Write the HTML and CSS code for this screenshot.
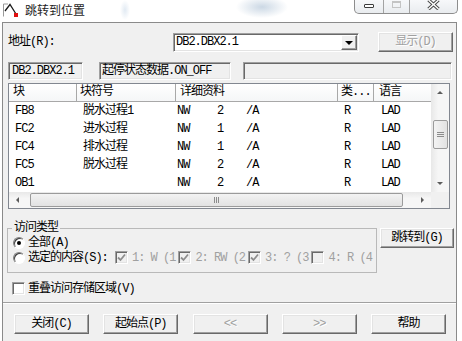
FILE: index.html
```html
<!DOCTYPE html>
<html lang="zh-CN">
<head>
    <meta charset="UTF-8">
    <title>跳转到位置</title>
    <link rel="stylesheet" href="styles.css">
</head>
<body>
    <div class="titlebar">
        <svg class="app-icon" viewBox="0 0 16 16" width="16" height="16">
            <path d="M1.5 2 V14.5 M1.5 2 H6" stroke="#9a9a9a" stroke-width="1" fill="none"/>
            <path d="M3 9 L8 2.5 L14 12" stroke="#1a1a1a" stroke-width="1.3" fill="none"/>
            <rect x="12" y="11" width="4" height="4" fill="#e01010"/>
        </svg>
        <span class="title">跳转到位置</span>
        <div class="caption">
            <span class="cap-btn cap-min"><i></i></span>
            <span class="cap-btn cap-max"><i></i></span>
            <span class="cap-btn cap-close">
                <svg viewBox="0 0 13 10" width="13" height="10">
                    <path d="M1.5 0 L11.5 9 M11.5 0 L1.5 9" stroke="#4a4a4a" stroke-width="3.4"/>
                    <path d="M1.5 0 L11.5 9 M11.5 0 L1.5 9" stroke="#fff" stroke-width="1.4"/>
                </svg>
            </span>
        </div>
    </div>

    <div class="client">
        <div class="row-addr">
            <label class="lbl-addr">地址(R):</label>
            <div class="combo">
                <span class="combo-text">DB2.DBX2.1</span>
                <span class="combo-btn"><i></i></span>
            </div>
            <button class="btn btn-show" disabled>显示(D)</button>
        </div>

        <div class="row-info">
            <div class="field f1">DB2.DBX2.1</div>
            <div class="field f2">起停状态数据.ON_OFF</div>
            <div class="field f3"></div>
        </div>

        <div class="list">
            <div class="lv-main">
                <div class="lv-row lv-head">
                    <span>块</span><span>块符号</span><span>详细资料</span><span>类...</span><span>语言</span>
                </div>
                <div class="lv-row"><span>FB8</span><span>脱水过程1</span><span class="det"><b>NW</b><b>2</b>/A</span><span>R</span><span>LAD</span></div>
                <div class="lv-row"><span>FC2</span><span>进水过程</span><span class="det"><b>NW</b><b>1</b>/A</span><span>R</span><span>LAD</span></div>
                <div class="lv-row"><span>FC4</span><span>排水过程</span><span class="det"><b>NW</b><b>1</b>/A</span><span>R</span><span>LAD</span></div>
                <div class="lv-row"><span>FC5</span><span>脱水过程</span><span class="det"><b>NW</b><b>2</b>/A</span><span>R</span><span>LAD</span></div>
                <div class="lv-row"><span>OB1</span><span></span><span class="det"><b>NW</b><b>2</b>/A</span><span>R</span><span>LAD</span></div>
            </div>
            <div class="vscroll">
                <span class="sb-arrow"><i class="tri-up"></i></span>
                <div class="sb-track"><div class="thumb thumb-v"><i></i><i></i><i></i></div></div>
                <span class="sb-arrow"><i class="tri-down"></i></span>
            </div>
            <div class="hscroll">
                <span class="sb-arrow"><i class="tri-left"></i></span>
                <div class="sb-track"><div class="thumb thumb-h"><i></i><i></i><i></i></div></div>
                <span class="sb-arrow"><i class="tri-right"></i></span>
            </div>
            <div class="corner"></div>
        </div>

        <div class="row-group">
            <fieldset class="access">
                <legend>访问类型</legend>
                <div class="opt">
                    <span class="radio checked"></span>全部(A)
                </div>
                <div class="opt">
                    <span class="radio"></span><span class="opt-sel">选定的内容(S):</span>
                    <span class="ci"><span class="cb"><svg viewBox="0 0 9 9"><path d="M1 4.5 L3.5 7 L8 1.5"/></svg></span>1: W (1</span>
                    <span class="ci"><span class="cb"><svg viewBox="0 0 9 9"><path d="M1 4.5 L3.5 7 L8 1.5"/></svg></span>2: RW (2</span>
                    <span class="ci"><span class="cb"><svg viewBox="0 0 9 9"><path d="M1 4.5 L3.5 7 L8 1.5"/></svg></span>3: ? (3</span>
                    <span class="ci"><span class="cb"></span>4: R (4</span>
                </div>
            </fieldset>
            <button class="btn btn-goto">跳转到(G)</button>
        </div>

        <div class="row-overlap">
            <span class="cb enabled"></span>重叠访问存储区域(V)
        </div>

        <div class="sep"></div>

        <div class="row-buttons">
            <button class="btn">关闭(C)</button>
            <button class="btn">起始点(P)</button>
            <button class="btn" disabled>&lt;&lt;</button>
            <button class="btn" disabled>&gt;&gt;</button>
            <button class="btn">帮助</button>
        </div>
    </div>
</body>
</html>
```

FILE: styles.css
```css
* { box-sizing: border-box; }
html, body { margin: 0; }
body { width: 462px; height: 341px; overflow: hidden; background: #fff; color: #000; font-family: "Liberation Mono", "Noto Sans CJK SC", monospace; font-size: 12px; line-height: 14px; letter-spacing: -1px; }

/* title bar (aero frame) */
.titlebar { height: 22px; display: flex; align-items: flex-start;
    background: radial-gradient(ellipse 26px 11px at 262px 7px, rgba(140, 168, 196, 0.45), rgba(255, 255, 255, 0) 100%),
                radial-gradient(ellipse 5px 10px at 125px 10px, rgba(170, 195, 220, 0.35), rgba(255, 255, 255, 0) 100%), #fff; }
.app-icon { margin: 2px 0 0 2px; flex: none; }
.title { margin: 3px 0 0 7px; font-family: "Noto Sans CJK SC", sans-serif; letter-spacing: 0; color: #1e1e1e; line-height: 14px; }
.caption { margin: 0 4px 0 auto; display: flex; height: 14px; border: 1px solid #8d8d8d; border-top: 0; border-radius: 0 0 5px 5px; background: linear-gradient(#f7f8fa, #e9ecef); overflow: hidden; }
.cap-btn { display: flex; justify-content: center; align-items: flex-start; border-left: 1px solid #a3a3a3; }
.cap-min { width: 28px; border-left: 0; padding-top: 4px; }
.cap-min i { width: 10px; height: 4px; border: 1px solid #3c3c3c; border-radius: 1px; background: #fff; }
.cap-max { width: 26px; padding-top: 1px; }
.cap-max i { width: 9px; height: 7px; border: 1px solid #c4c4c4; border-top-width: 2px; }
.cap-close { width: 48px; }

/* client area */
.client { margin: 0 5px 0 2px; height: 319px; background: #f0f0f0; border: 1px solid #8a8a8a; border-bottom: 0; }

.combo, .field { border: 1px solid; border-color: #a0a0a0 #fff #fff #a0a0a0; box-shadow: inset 1px 1px #696969, inset -1px -1px #e3e3e3; }

.row-addr { display: flex; align-items: center; height: 20px; margin-top: 9px; padding-left: 5px; }
.lbl-addr { width: 165px; }
.combo { width: 186px; height: 19px; display: flex; background: #fff; padding: 1px 1px 1px 2px; }
.combo-text { flex: 1; line-height: 15px; }
.combo-btn { width: 16px; display: flex; align-items: center; justify-content: center; background: #f0f0f0; border: 1px solid; border-color: #fff #696969 #696969 #fff; box-shadow: inset -1px -1px #a0a0a0; }
.combo-btn i { border: 4px solid transparent; border-top: 4px solid #000; border-bottom: 0; width: 0; height: 0; margin-top: 1px; }

.btn { font: inherit; letter-spacing: -1px; color: #000; width: 75px; height: 20px; padding: 0; background: #f0f0f0; border: 1px solid; border-color: #fff #696969 #696969 #fff; box-shadow: inset -1px -1px #a0a0a0, inset 1px 1px #e3e3e3; }
.btn:disabled { color: #a0a0a0; text-shadow: 1px 1px #fff; }
.btn-show { margin-left: 19px; }

.row-info { display: flex; height: 18px; margin-top: 10px; padding-left: 5px; }
.field { background: #f0f0f0; line-height: 16px; padding-left: 3px; white-space: nowrap; overflow: hidden; }
.f1 { width: 75px; }
.f2 { width: 132px; margin-left: 16px; padding-left: 2px; }
.f3 { width: 209px; margin-left: 12px; }

/* list view */
.list { margin: 3px 0 0 5px; width: 442px; height: 126px; background: #fff; border: 1px solid #828790; display: grid; grid-template-columns: 422px 18px; grid-template-rows: 108px 16px; }
.lv-main { overflow: hidden; }
.lv-row { display: grid; grid-template-columns: 68px 99px 162px 36px 57px; height: 18px; line-height: 18px; white-space: nowrap; }
.lv-row span { padding-left: 6px; overflow: hidden; }
.lv-row .det { padding-left: 1px; }
.det b { display: inline-block; font-weight: normal; }
.det b:first-child { width: 40px; }
.det b + b { width: 29px; }
.lv-row span:nth-child(5) { padding-left: 7px; }
.lv-head { background: linear-gradient(#fff, #f5f6f7); border-bottom: 1px solid #a8a8a8; line-height: 17px; }
.lv-head span { border-right: 1px solid #a8a8a8; padding-left: 4px; }
.lv-head span:nth-child(2) { padding-left: 3px; }
.lv-head span:nth-child(4) { padding-left: 3px; }
.lv-head span:nth-child(5) { padding-left: 5px; border-right: 0; }

.vscroll, .hscroll { display: flex; background: linear-gradient(90deg, #e8e8e8, #f6f6f6 40%, #f6f6f6); }
.vscroll { flex-direction: column; }
.hscroll { background: linear-gradient(#e8e8e8, #f6f6f6 40%, #f6f6f6); }
.sb-arrow { flex: none; width: 17px; height: 17px; display: flex; align-items: center; justify-content: center; }
.hscroll .sb-arrow { height: 16px; }
.sb-track { flex: 1; display: flex; }
.vscroll .sb-track { flex-direction: column; }
.thumb { border: 1px solid #9b9b9b; border-radius: 2px; display: flex; align-items: center; justify-content: center; gap: 1px; }
.thumb-v { margin: 19px 1px 0 2px; height: 29px; flex-direction: column; background: linear-gradient(90deg, #f3f3f3, #e2e2e2); }
.thumb-v i { width: 7px; height: 1px; background: #8c8c8c; }
.thumb-h { margin: 1px 0 1px 4px; width: 373px; background: linear-gradient(#f3f3f3, #e2e2e2); }
.thumb-h i { width: 1px; height: 6px; background: #8c8c8c; }
.tri-up, .tri-down, .tri-left, .tri-right { width: 0; height: 0; border: 3.5px solid transparent; }
.tri-up { border-bottom: 3px solid #5c5c5c; border-top: 0; }
.tri-down { border-top: 3px solid #5c5c5c; border-bottom: 0; }
.tri-left { border-right: 3px solid #5c5c5c; border-left: 0; }
.tri-right { border-left: 3px solid #5c5c5c; border-right: 0; }
.corner { background: #f0f0f0; }

/* access group */
.row-group { display: flex; align-items: flex-start; margin-top: 12px; }
.access { margin: 0 0 0 4px; width: 370px; height: 52px; padding: 0 0 0 3px; border: 1px solid #b9b9b9; min-width: 0; }
.access legend { padding: 0 2px; line-height: 14px; margin-left: 1px; }
.opt { display: flex; align-items: center; height: 15px; white-space: nowrap; }
.radio { flex: none; width: 12px; height: 12px; margin: 0 3px 0 2px; border-radius: 50%; border: 1px solid; border-color: #808080 #fff #fff #808080; background: #fff; box-shadow: inset 1px 1px #404040; display: flex; align-items: center; justify-content: center; }
.radio.checked::after { content: ""; width: 4px; height: 4px; border-radius: 50%; background: #000; }
.opt-sel { width: 87px; flex: none; }
.ci { flex: none; display: flex; align-items: center; margin-right: 3px; color: #a0a0a0; }
.cb { flex: none; width: 13px; height: 13px; margin-right: 4px; border: 1px solid; border-color: #a0a0a0 #fff #fff #a0a0a0; box-shadow: inset 1px 1px #696969, inset -1px -1px #e3e3e3; background: #f0f0f0; display: flex; align-items: center; justify-content: center; }
.cb svg { width: 9px; height: 9px; }
.cb svg path { stroke: #8d8d8d; stroke-width: 1.8; fill: none; }
.cb.enabled { background: #fff; margin: 0 3px 0 0; }
.btn-goto { margin: 7px 0 0 3px; width: 74px; }

.row-overlap { display: flex; align-items: center; height: 15px; margin: 8px 0 0 9px; }

.sep { margin-top: 6px; border-top: 1px solid #a0a0a0; border-bottom: 1px solid #fff; }

.row-buttons { display: flex; justify-content: space-between; margin-top: 10px; padding: 0 10px 0 11px; }
```
